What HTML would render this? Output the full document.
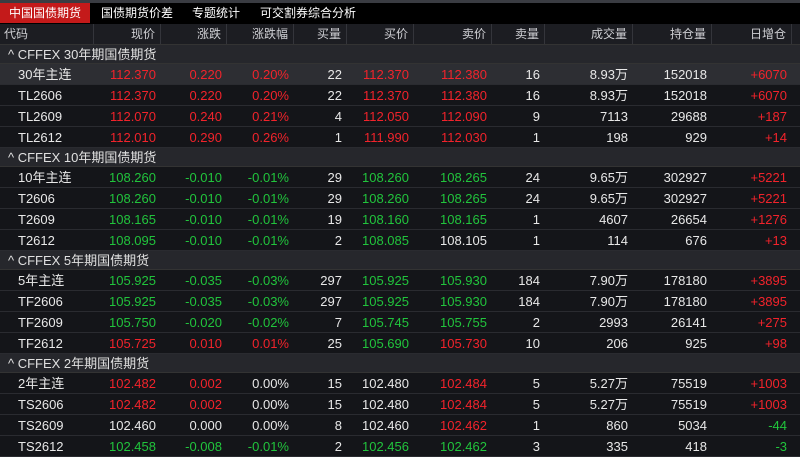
<!DOCTYPE html><html><head><meta charset="utf-8"><style>
*{margin:0;padding:0;box-sizing:border-box}
body{width:800px;height:457px;overflow:hidden;background:#141519;font-family:"Liberation Sans","Noto Sans CJK SC",sans-serif;color:#e8e8e8}
.top{height:24px;background:#000;position:relative}
.strip{position:absolute;top:0;left:0;right:0;height:3px;background:#3a3c42}
.tab{position:absolute;top:3px;height:20px;line-height:20px;font-size:12px;color:#fff;text-align:center}
.tab.on{background:#c41a1a}
.row{display:flex;height:21px;line-height:21px;font-size:13px;border-bottom:1px solid #2a2b30}
.hd{height:21px;line-height:20px;font-size:12px;color:#cfd0d4;background:#1c1d22;display:flex;border-bottom:1px solid #333}
.hd div{border-right:1px solid #34353b}
.grp{height:19px;line-height:19px;font-size:13px;background:#26272c;padding-left:8px;color:#e0e0e0;border-bottom:1px solid #333}
.c{text-align:right;padding-right:5px;white-space:nowrap}
.c0{width:94px;text-align:left;padding-left:18px}
.hd .c0{padding-left:4px}
.w1{width:67px}.w2{width:66px}.w3{width:67px}.w4{width:53px}.w5{width:67px}.w6{width:78px}.w7{width:53px}.w8{width:88px}.w9{width:79px}.w10{width:80px}
.r{color:#f2232b}.g{color:#21c43c}.sel{background:#2d2e33}
</style></head><body>
<div class="top"><div class="strip"></div>
<div class="tab on" style="left:0;width:90px">中国国债期货</div>
<div class="tab" style="left:96px;width:82px">国债期货价差</div>
<div class="tab" style="left:186px;width:60px">专题统计</div>
<div class="tab" style="left:258px;width:100px">可交割券综合分析</div>
</div>
<div class="hd"><div class="c c0">代码</div><div class="c w1">现价</div><div class="c w2">涨跌</div><div class="c w3">涨跌幅</div><div class="c w4">买量</div><div class="c w5">买价</div><div class="c w6">卖价</div><div class="c w7">卖量</div><div class="c w8">成交量</div><div class="c w9">持仓量</div><div class="c w10">日增仓</div></div>
<div class="grp">^ CFFEX 30年期国债期货</div>
<div class="row sel"><div class="c c0">30年主连</div><div class="c w1 r">112.370</div><div class="c w2 r">0.220</div><div class="c w3 r">0.20%</div><div class="c w4">22</div><div class="c w5 r">112.370</div><div class="c w6 r">112.380</div><div class="c w7">16</div><div class="c w8">8.93万</div><div class="c w9">152018</div><div class="c w10 r">+6070</div></div>
<div class="row"><div class="c c0">TL2606</div><div class="c w1 r">112.370</div><div class="c w2 r">0.220</div><div class="c w3 r">0.20%</div><div class="c w4">22</div><div class="c w5 r">112.370</div><div class="c w6 r">112.380</div><div class="c w7">16</div><div class="c w8">8.93万</div><div class="c w9">152018</div><div class="c w10 r">+6070</div></div>
<div class="row"><div class="c c0">TL2609</div><div class="c w1 r">112.070</div><div class="c w2 r">0.240</div><div class="c w3 r">0.21%</div><div class="c w4">4</div><div class="c w5 r">112.050</div><div class="c w6 r">112.090</div><div class="c w7">9</div><div class="c w8">7113</div><div class="c w9">29688</div><div class="c w10 r">+187</div></div>
<div class="row"><div class="c c0">TL2612</div><div class="c w1 r">112.010</div><div class="c w2 r">0.290</div><div class="c w3 r">0.26%</div><div class="c w4">1</div><div class="c w5 r">111.990</div><div class="c w6 r">112.030</div><div class="c w7">1</div><div class="c w8">198</div><div class="c w9">929</div><div class="c w10 r">+14</div></div>
<div class="grp">^ CFFEX 10年期国债期货</div>
<div class="row"><div class="c c0">10年主连</div><div class="c w1 g">108.260</div><div class="c w2 g">-0.010</div><div class="c w3 g">-0.01%</div><div class="c w4">29</div><div class="c w5 g">108.260</div><div class="c w6 g">108.265</div><div class="c w7">24</div><div class="c w8">9.65万</div><div class="c w9">302927</div><div class="c w10 r">+5221</div></div>
<div class="row"><div class="c c0">T2606</div><div class="c w1 g">108.260</div><div class="c w2 g">-0.010</div><div class="c w3 g">-0.01%</div><div class="c w4">29</div><div class="c w5 g">108.260</div><div class="c w6 g">108.265</div><div class="c w7">24</div><div class="c w8">9.65万</div><div class="c w9">302927</div><div class="c w10 r">+5221</div></div>
<div class="row"><div class="c c0">T2609</div><div class="c w1 g">108.165</div><div class="c w2 g">-0.010</div><div class="c w3 g">-0.01%</div><div class="c w4">19</div><div class="c w5 g">108.160</div><div class="c w6 g">108.165</div><div class="c w7">1</div><div class="c w8">4607</div><div class="c w9">26654</div><div class="c w10 r">+1276</div></div>
<div class="row"><div class="c c0">T2612</div><div class="c w1 g">108.095</div><div class="c w2 g">-0.010</div><div class="c w3 g">-0.01%</div><div class="c w4">2</div><div class="c w5 g">108.085</div><div class="c w6">108.105</div><div class="c w7">1</div><div class="c w8">114</div><div class="c w9">676</div><div class="c w10 r">+13</div></div>
<div class="grp">^ CFFEX 5年期国债期货</div>
<div class="row"><div class="c c0">5年主连</div><div class="c w1 g">105.925</div><div class="c w2 g">-0.035</div><div class="c w3 g">-0.03%</div><div class="c w4">297</div><div class="c w5 g">105.925</div><div class="c w6 g">105.930</div><div class="c w7">184</div><div class="c w8">7.90万</div><div class="c w9">178180</div><div class="c w10 r">+3895</div></div>
<div class="row"><div class="c c0">TF2606</div><div class="c w1 g">105.925</div><div class="c w2 g">-0.035</div><div class="c w3 g">-0.03%</div><div class="c w4">297</div><div class="c w5 g">105.925</div><div class="c w6 g">105.930</div><div class="c w7">184</div><div class="c w8">7.90万</div><div class="c w9">178180</div><div class="c w10 r">+3895</div></div>
<div class="row"><div class="c c0">TF2609</div><div class="c w1 g">105.750</div><div class="c w2 g">-0.020</div><div class="c w3 g">-0.02%</div><div class="c w4">7</div><div class="c w5 g">105.745</div><div class="c w6 g">105.755</div><div class="c w7">2</div><div class="c w8">2993</div><div class="c w9">26141</div><div class="c w10 r">+275</div></div>
<div class="row"><div class="c c0">TF2612</div><div class="c w1 r">105.725</div><div class="c w2 r">0.010</div><div class="c w3 r">0.01%</div><div class="c w4">25</div><div class="c w5 g">105.690</div><div class="c w6 r">105.730</div><div class="c w7">10</div><div class="c w8">206</div><div class="c w9">925</div><div class="c w10 r">+98</div></div>
<div class="grp">^ CFFEX 2年期国债期货</div>
<div class="row"><div class="c c0">2年主连</div><div class="c w1 r">102.482</div><div class="c w2 r">0.002</div><div class="c w3">0.00%</div><div class="c w4">15</div><div class="c w5">102.480</div><div class="c w6 r">102.484</div><div class="c w7">5</div><div class="c w8">5.27万</div><div class="c w9">75519</div><div class="c w10 r">+1003</div></div>
<div class="row"><div class="c c0">TS2606</div><div class="c w1 r">102.482</div><div class="c w2 r">0.002</div><div class="c w3">0.00%</div><div class="c w4">15</div><div class="c w5">102.480</div><div class="c w6 r">102.484</div><div class="c w7">5</div><div class="c w8">5.27万</div><div class="c w9">75519</div><div class="c w10 r">+1003</div></div>
<div class="row"><div class="c c0">TS2609</div><div class="c w1">102.460</div><div class="c w2">0.000</div><div class="c w3">0.00%</div><div class="c w4">8</div><div class="c w5">102.460</div><div class="c w6 r">102.462</div><div class="c w7">1</div><div class="c w8">860</div><div class="c w9">5034</div><div class="c w10 g">-44</div></div>
<div class="row"><div class="c c0">TS2612</div><div class="c w1 g">102.458</div><div class="c w2 g">-0.008</div><div class="c w3 g">-0.01%</div><div class="c w4">2</div><div class="c w5 g">102.456</div><div class="c w6 g">102.462</div><div class="c w7">3</div><div class="c w8">335</div><div class="c w9">418</div><div class="c w10 g">-3</div></div>
</body></html>
